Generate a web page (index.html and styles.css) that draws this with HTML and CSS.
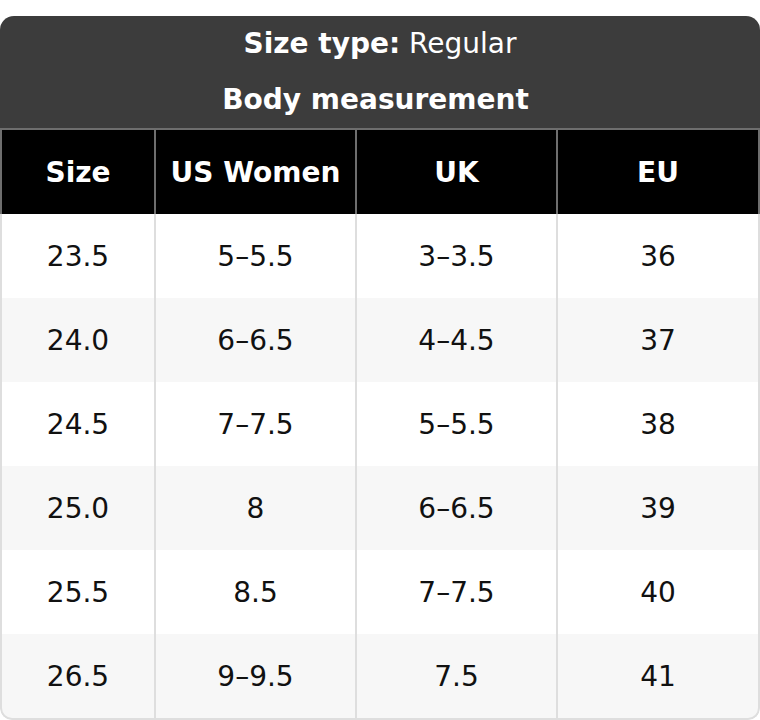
FILE: index.html
```html
<!DOCTYPE html>
<html lang="en">
<head>
<meta charset="utf-8">
<title>Size chart</title>
<link rel="stylesheet" href="styles.css">
</head>
<body>
<div class="card">
  <div class="caption">
    <div class="caption-line"><b>Size type:</b> Regular</div>
    <div class="caption-line caption-sub"><b>Body measurement</b></div>
  </div>
  <table class="chart">
    <colgroup>
      <col class="c1"><col class="c2"><col class="c3"><col class="c4">
    </colgroup>
    <thead>
      <tr><th>Size</th><th>US Women</th><th>UK</th><th>EU</th></tr>
    </thead>
    <tbody>
      <tr><td>23.5</td><td>5–5.5</td><td>3–3.5</td><td>36</td></tr>
      <tr><td>24.0</td><td>6–6.5</td><td>4–4.5</td><td>37</td></tr>
      <tr><td>24.5</td><td>7–7.5</td><td>5–5.5</td><td>38</td></tr>
      <tr><td>25.0</td><td>8</td><td>6–6.5</td><td>39</td></tr>
      <tr><td>25.5</td><td>8.5</td><td>7–7.5</td><td>40</td></tr>
      <tr><td>26.5</td><td>9–9.5</td><td>7.5</td><td>41</td></tr>
    </tbody>
  </table>
</div>
</body>
</html>
```
FILE: styles.css
```css
html, body {
  margin: 0;
  padding: 0;
  background: #ffffff;
}
body {
  padding-top: 16px;
  font-family: "DejaVu Sans", sans-serif;
  font-size: 28px;
}
.card {
  width: 760px;
  border-radius: 14px 14px 12px 12px;
  overflow: hidden;
}
.caption {
  background: #3c3c3c;
  color: #ffffff;
  text-align: center;
}
.caption-line {
  height: 56px;
  line-height: 56px;
}
.caption-sub {
  padding-right: 9px;
}
.chart {
  width: 100%;
  border-spacing: 0;
  border-collapse: separate;
  table-layout: fixed;
}
.c1 { width: 154px; }
.c2 { width: 201px; }
.c3 { width: 201px; }
.chart th, .chart td {
  box-sizing: border-box;
  padding: 0;
  text-align: center;
  vertical-align: middle;
}
.chart th {
  background: #000000;
  color: #ffffff;
  font-weight: bold;
  height: 86px;
  border-top: 2px solid #6e6e6e;
  border-left: 2px solid #6e6e6e;
}
.chart th:last-child {
  border-right: 2px solid #6e6e6e;
}
.chart td {
  height: 84px;
  color: #111111;
  background: #ffffff;
  border-left: 2px solid #dedede;
}
.chart td:last-child {
  border-right: 2px solid #dedede;
}
.chart tbody tr:nth-child(even) td {
  background: #f7f7f7;
}
.chart tbody tr:last-child td {
  height: 86px;
  border-bottom: 2px solid #dedede;
}
.chart tbody tr:last-child td:first-child {
  border-bottom-left-radius: 12px;
}
.chart tbody tr:last-child td:last-child {
  border-bottom-right-radius: 12px;
}
```
